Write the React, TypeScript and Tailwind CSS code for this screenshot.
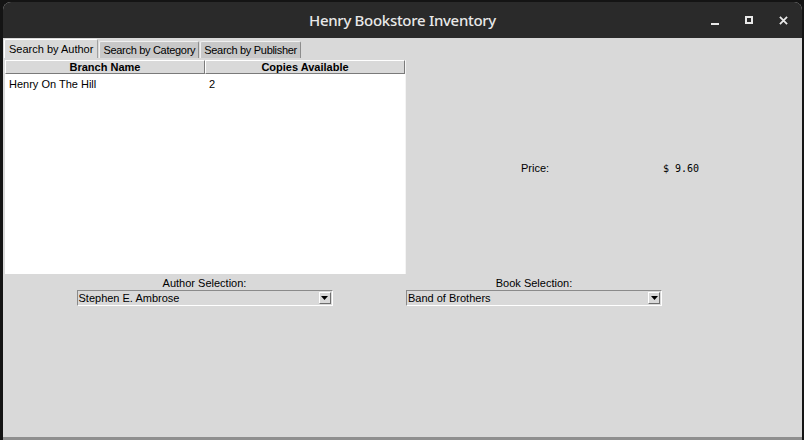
import { useState } from "react";

const tabs = ["Search by Author", "Search by Category", "Search by Publisher"];

const rows = [{ branch: "Henry On The Hill", copies: "2" }];

function Combo({ value }: { value: string }) {
  return (
    <div className="flex h-[16px] w-[256px] border border-t-[#8a8a8a] border-l-[#8a8a8a] border-b-white border-r-white bg-[#d9d9d9]">
      <div className="flex-1 pl-[1px] text-[11px] leading-[14px] text-black">{value}</div>
      <div className="m-[1px] flex w-[12px] items-center justify-center border border-t-white border-l-white border-b-[#6e6e6e] border-r-[#6e6e6e] bg-[#d9d9d9]">
        <svg width="7" height="4" viewBox="0 0 7 4">
          <path d="M0 0h7L3.5 4z" fill="#000" />
        </svg>
      </div>
    </div>
  );
}

export default function App() {
  const [active, setActive] = useState(0);

  return (
    <div
      className="flex h-[440px] w-[804px] bg-[#141414] pl-[3px] pr-[2px] pt-[2px]"
      style={{ fontFamily: '"Liberation Sans", Arial, sans-serif' }}
    >
      <div className="flex flex-1 flex-col overflow-hidden rounded-t-[8px] bg-[#d9d9d9]">
        {/* Title bar */}
        <div className="relative flex h-[36px] items-center justify-center bg-[#2a2a2a]">
          <span
            className="text-[15px] font-medium tracking-[-0.3px] text-[#e8e8e8]"
            style={{ fontFamily: '"Noto Sans", "Open Sans", sans-serif' }}
          >
            Henry Bookstore Inventory
          </span>
          <div className="absolute right-[14px] top-0 flex h-full items-center gap-[26px]">
            <div className="mt-[8px] h-[2px] w-[8px] bg-[#e8e8e8]" />
            <div className="h-[8px] w-[8px] border-2 border-[#e8e8e8]" />
            <svg width="9" height="9" viewBox="0 0 10 10">
              <path d="M1 1l8 8M9 1L1 9" stroke="#e8e8e8" strokeWidth="2" />
            </svg>
          </div>
        </div>

        {/* Tabs */}
        <div className="flex h-[20px] items-end pl-[1px]">
          {tabs.map((t, i) => (
            <button
              key={t}
              onClick={() => setActive(i)}
              className={
                i === active
                  ? "mr-[1px] h-[19px] rounded-t-[2px] border border-b-0 border-[#a0a0a0] border-l-white border-t-white bg-[#d9d9d9] px-[4px] text-[11px] leading-[16px] text-black"
                  : "mr-[1px] h-[17px] rounded-t-[2px] border border-b-0 border-[#8c8c8c] border-l-[#f0f0f0] border-t-[#f0f0f0] bg-[#c8c8c8] px-[3px] text-[11px] leading-[14px] tracking-[-0.3px] text-black"
              }
            >
              {t}
            </button>
          ))}
        </div>

        {/* Body */}
        <div className="flex h-[216px] pl-[2px] pt-[2px]">
          <div className="flex w-[401px] flex-col border-r border-[#f4f4f4] bg-white">
            <div className="flex h-[14px]">
              <div className="w-[200px] border border-t-white border-l-white border-b-[#7a7a7a] border-r-[#7a7a7a] bg-[#d9d9d9] text-center text-[11px] font-bold leading-[12px] text-black">
                Branch Name
              </div>
              <div className="flex-1 border border-t-white border-l-white border-b-[#7a7a7a] border-r-[#7a7a7a] bg-[#d9d9d9] text-center text-[11px] font-bold leading-[12px] text-black">
                Copies Available
              </div>
            </div>
            {rows.map((r) => (
              <div key={r.branch} className="mt-[4px] flex h-[13px] text-[11px] leading-[13px] text-black">
                <div className="w-[200px] pl-[4px]">{r.branch}</div>
                <div className="pl-[4px]">{r.copies}</div>
              </div>
            ))}
          </div>
          <div className="flex flex-1 items-center pt-[2px]">
            <span className="ml-[115px] w-[142px] text-[11px] text-black">Price:</span>
            <span
              className="text-[10px] text-black"
              style={{ fontFamily: '"DejaVu Sans Mono", "Liberation Mono", monospace' }}
            >
              $ 9.60
            </span>
          </div>
        </div>

        {/* Selections */}
        <div className="flex pt-[2px]">
          <div className="flex w-[403px] flex-col items-center">
            <span className="text-[11px] leading-[14px] text-black">Author Selection:</span>
            <Combo value="Stephen E. Ambrose" />
          </div>
          <div className="flex w-[256px] flex-col items-center">
            <span className="text-[11px] leading-[14px] text-black">Book Selection:</span>
            <Combo value="Band of Brothers" />
          </div>
        </div>

        <div className="flex-1" />
        <div className="h-[3px] bg-[#8f8f8f]" />
      </div>
    </div>
  );
}
